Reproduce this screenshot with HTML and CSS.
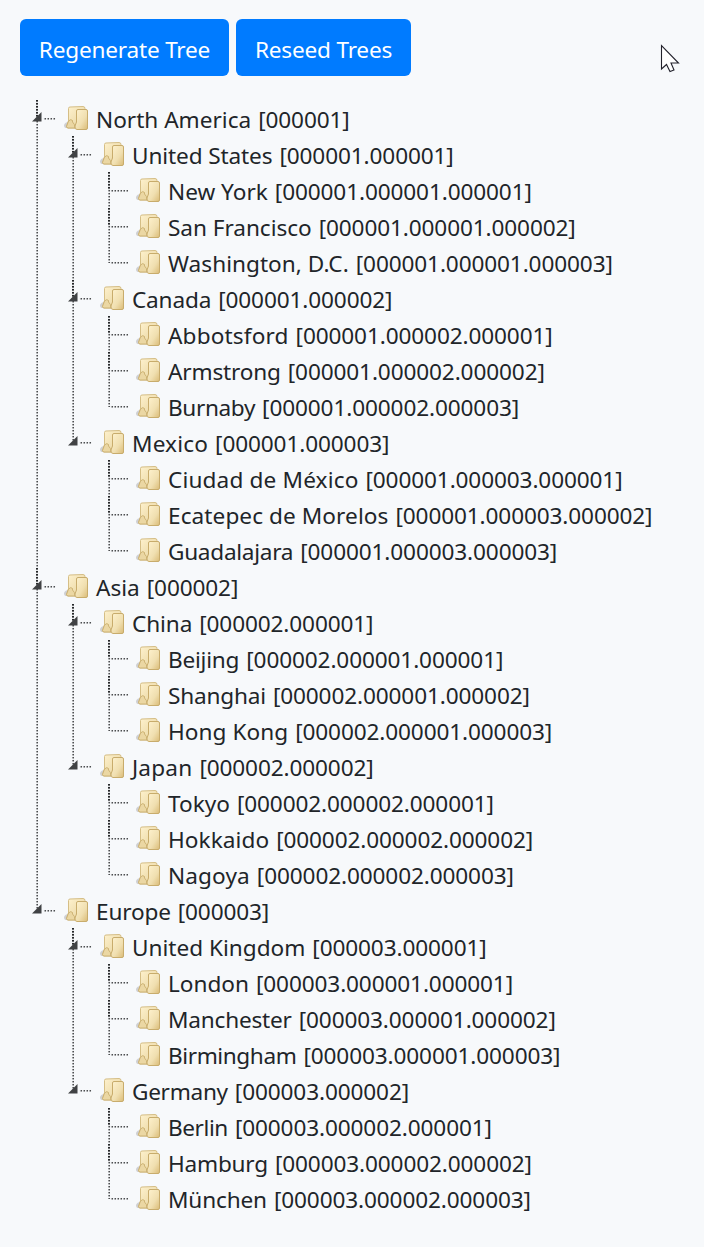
FILE: index.html
```html
<!DOCTYPE html>
<html lang="en">
<head>
<meta charset="utf-8">
<title>Trees</title>
<link rel="stylesheet" href="styles.css">
</head>
<body>
<div class="toolbar">
  <button class="btn btn-regenerate">Regenerate Tree</button>
  <button class="btn btn-reseed">Reseed Trees</button>
</div>
<ul class="tree" id="tree"></ul>
<svg class="cursor" width="20" height="30" viewBox="0 0 20 30"><path d="M1.500 1.500V25L6.500 20.500L10 27.500L14 26L11 19H18.500Z" fill="#fff" stroke="#22222c" stroke-width="1.100"/></svg>
<script src="tree.js"></script>
</body>
</html>
```
FILE: styles.css
```css
body { margin: 0; background: #f7f9fb; color: #212529; font-family: "Noto Sans", "Open Sans", sans-serif; font-size: 22.6px; }
.toolbar { display: flex; gap: 7px; padding: 19px 20px 24px; }
.btn { height: 57px; padding: 5px 0 0; border: 0; border-radius: 6px; background: #007bff; color: #fff; font: inherit; line-height: 52px; letter-spacing: -0.2px; white-space: nowrap; }
.btn-regenerate { width: 209px; }
.btn-reseed { width: 175px; }
.tree, .tree ul { margin: 0; padding: 0; list-style: none; }
.tree { margin-left: 32px; }
.tree ul { padding-left: 36px; }
.node {
  background-image: repeating-linear-gradient(#26282a 0 1px, #6c6e70 1px 2px, #e4e6e8 2px 3px), repeating-linear-gradient(#4c4e50 0 1px, #a8aaac 1px 2px, #f0f2f4 2px 3px), repeating-linear-gradient(#8c8e90 0 1px, #c8cacc 1px 2px, #f5f7f9 2px 3px);
  background-size: 2px 18px, 1px 100%, 1px 100%;
  background-position: 4px 0, 5px 0, 4px 0;
  background-repeat: no-repeat;
}
.node:last-child {
  background-image: repeating-linear-gradient(#4c4e50 0 1px, #a8aaac 1px 2px, #f0f2f4 2px 3px), repeating-linear-gradient(#8c8e90 0 1px, #c8cacc 1px 2px, #f5f7f9 2px 3px);
  background-size: 1px 19px;
  background-position: 5px 0, 4px 0;
}
.row { display: flex; height: 36px; align-items: flex-start; white-space: nowrap; }
.toggle { width: 10px; height: 10px; margin-top: 12px; fill: #404244; flex: none; }
.spacer { width: 6px; flex: none; }
.toggle + .spacer { width: 1px; }
.branch { height: 2px; margin-top: 18px; flex: 1; background: repeating-linear-gradient(90deg, #f0f2f4 0 1px, #a8aaac 1px 2px, #4c4e50 2px 3px) 0 0 / 100% 1px no-repeat, repeating-linear-gradient(90deg, #f5f7f9 0 1px, #c8cacc 1px 2px, #9c9ea0 2px 3px) 0 1px / 100% 1px no-repeat; }
.lead { display: flex; width: 24px; flex: none; }
.folder { width: 26px; height: 26px; margin: 5px 7px 0 7px; flex: none; }
.label { line-height: 36px; padding-top: 2px; }
.id { margin-left: 7px; letter-spacing: -0.12px; }
.cursor { position: absolute; left: 660px; top: 44px; }
```
FILE: tree.js
```js
// [name, tracking adjustment over the whole name in px, children]
const data = [
  ["North America", 0, [
    ["United States", -1.5, [["New York", 0], ["San Francisco", -0.5], ["Washington, D.C.", 0.5]]],
    ["Canada", -1, [["Abbotsford", 1.5], ["Armstrong", -1.5], ["Burnaby", -2.5]]],
    ["Mexico", 1, [["Ciudad de México", 2.5], ["Ecatepec de Morelos", 1.5], ["Guadalajara", -3]]]
  ]],
  ["Asia", 0, [
    ["China", -0.5, [["Beijing", -1.5], ["Shanghai", -1.5], ["Hong Kong", 0.5]]],
    ["Japan", 1, [["Tokyo", 0], ["Hokkaido", 0.5], ["Nagoya", 0.7]]]
  ]],
  ["Europe", -1, [
    ["United Kingdom", 0, [["London", 0], ["Manchester", -2], ["Birmingham", -4]]],
    ["Germany", -2, [["Berlin", -2.5], ["Hamburg", -1.5], ["München", -1]]]
  ]]
];

const folder = `<svg class="folder" viewBox="0 0 26 26">
  <defs><linearGradient id="paper" x2="1" y2="1"><stop stop-color="#fff3d0"/><stop offset=".6" stop-color="#f0dfb0"/><stop offset="1" stop-color="#dabb76"/></linearGradient></defs>
  <path d="M1 20Q2 17 6 17V23H3Q1 23 1 20Z" fill="#cfd0d3"/>
  <path d="M5.500 3.500Q5.500 2 7 2L20 1.500Q22 1.500 22 3.500V23H4.500L3.500 21.500L5.500 16Z" fill="url(#paper)" stroke="#d5be86"/>
  <path d="M5.500 16Q8 13.500 9.500 15.500V17Q12 19 12 23H4.500L3.500 21.500Z" fill="#ebd7a3" stroke="#c5a968" stroke-width=".8"/>
  <path d="M13.500 6Q13.500 4.500 15 4.500H23Q24.500 4.500 24.500 6V23Q24.500 24.500 23 24.500H14Q11.500 24.500 12 21L13.500 17Z" fill="url(#paper)" stroke="#c8ac6c"/>
</svg>`;

function render(nodes, prefix, parent) {
  nodes.forEach(([name, adjust, children], i) => {
    const code = prefix + String(i + 1).padStart(6, "0");
    const li = document.createElement("li");
    li.className = "node";
    const toggle = children ? '<svg class="toggle" viewBox="0 0 10 10"><path d="M9.500 0V9.500H0Z"/></svg>' : "";
    li.innerHTML = `<div class="row"><span class="lead">${toggle}<span class="spacer"></span><span class="branch"></span></span>${folder}<span class="label"><span style="letter-spacing:${(adjust / name.length).toFixed(3)}px">${name}</span><span class="id">[${code}]</span></span></div>`;
    if (children) {
      const ul = document.createElement("ul");
      li.append(ul);
      render(children, code + ".", ul);
    }
    parent.append(li);
  });
}

render(data, "", document.getElementById("tree"));
```
